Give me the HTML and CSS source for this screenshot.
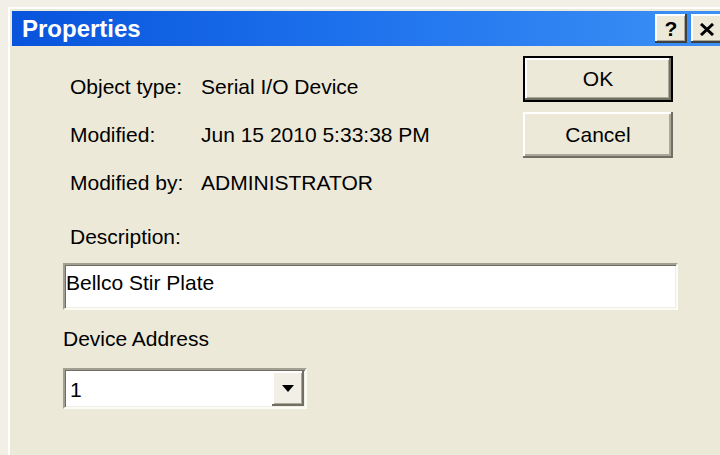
FILE: index.html
```html
<!DOCTYPE html>
<html lang="en">
<head>
<meta charset="utf-8">
<title>Properties</title>
<link rel="stylesheet" href="styles.css">
</head>
<body>
<div class="window">
  <div class="titlebar">
    <span class="title">Properties</span>
    <div class="caption-buttons">
      <button class="cap-btn help" type="button">?</button>
      <button class="cap-btn close" type="button" aria-label="Close">
        <svg width="16" height="13" viewBox="0 0 16 13"><path d="M2 1 L14 12 M14 1 L2 12" stroke="#000" stroke-width="3" fill="none"/></svg>
      </button>
    </div>
  </div>
  <div class="client">
    <div class="top">
      <dl class="info">
        <div class="row"><dt>Object type:</dt><dd>Serial I/O Device</dd></div>
        <div class="row"><dt>Modified:</dt><dd>Jun 15 2010 5:33:38 PM</dd></div>
        <div class="row"><dt>Modified by:</dt><dd>ADMINISTRATOR</dd></div>
      </dl>
      <div class="actions">
        <button class="btn default" type="button">OK</button>
        <button class="btn" type="button">Cancel</button>
      </div>
    </div>
    <div class="caption indented">Description:</div>
    <div class="textbox">Bellco Stir Plate</div>
    <div class="caption address">Device Address</div>
    <div class="combo">
      <span class="combo-value">1</span>
      <span class="combo-btn">
        <svg width="12" height="7" viewBox="0 0 12 7"><path d="M0 0 H12 L6 7 Z" fill="#000"/></svg>
      </span>
    </div>
  </div>
</div>
</body>
</html>
```
FILE: styles.css
```css
html, body {
  margin: 0;
  padding: 0;
}

body {
  background: #f1efe6;
  overflow: hidden;
  width: 720px;
  height: 455px;
  font-family: "Liberation Sans", Arial, sans-serif;
  font-size: 21px;
  color: #000;
}

.window {
  box-sizing: border-box;
  width: 720px;
  height: 460px;
  margin: 7px 0 0 8px;
  border-top: 2px solid #fff;
  border-left: 2px solid #fff;
  padding: 2px 0 0 2px;
  background: #ece9d8;
}

/* caption bar */
.titlebar {
  height: 35px;
  display: flex;
  align-items: center;
  padding: 0 5px 0 10px;
  background: linear-gradient(to right, #0854dc 0%, #1d70ec 45%, #3d91f6 100%);
}

.title {
  color: #fff;
  font-weight: bold;
  font-size: 24px;
  flex: 1;
}

.caption-buttons {
  display: flex;
  gap: 4px;
}

.cap-btn {
  width: 32px;
  height: 29px;
  padding: 0;
  border: none;
  background: #ece9d8;
  box-shadow: inset -2px -2px 0 #404040, inset 2px 2px 0 #fff, inset -3px -3px 0 #aca899;
  display: flex;
  align-items: center;
  justify-content: center;
  font-family: "Liberation Sans", Arial, sans-serif;
  font-weight: bold;
  font-size: 21px;
  color: #000;
}

.cap-btn.close svg {
  margin-top: 1px;
}

/* dialog body */
.client {
  padding: 0 50px 0 51px;
}

.top {
  display: flex;
  align-items: flex-start;
}

.info {
  margin: 17px 0 0 0;
  padding-left: 7px;
}

.row {
  display: grid;
  grid-template-columns: 131px auto;
  line-height: 48px;
}

.row dt,
.row dd {
  margin: 0;
  white-space: nowrap;
}

.actions {
  margin: 10px 5px 0 auto;
  display: flex;
  flex-direction: column;
  gap: 10px;
}

.btn {
  box-sizing: border-box;
  width: 150px;
  height: 46px;
  padding: 0;
  border: none;
  background: #ece9d8;
  font-family: "Liberation Sans", Arial, sans-serif;
  font-size: 21px;
  color: #000;
  box-shadow: inset -2px -2px 0 #716f64, inset 2px 2px 0 #fff, inset -4px -4px 0 #aca899;
}

.btn.default {
  border: 2px solid #000;
  box-shadow: inset -2px -2px 0 #716f64, inset 2px 2px 0 #fff, inset -3px -3px 0 #aca899;
}

.caption {
  line-height: 24px;
  white-space: nowrap;
}

.caption.indented {
  margin-top: 18px;
  padding-left: 7px;
}

.caption.address {
  margin-top: 17px;
}

.textbox {
  box-sizing: border-box;
  margin-top: 14px;
  height: 47px;
  padding: 6px 2px 0 1px;
  line-height: 24px;
  background: #fff;
  border: 2px solid;
  border-color: #a19e92 #fbfbf8 #fbfbf8 #a19e92;
  box-shadow: inset 1px 1px 0 #6f6d62, inset -1px -1px 0 #f1efe2;
}

.combo {
  box-sizing: border-box;
  margin-top: 17px;
  width: 244px;
  height: 41px;
  display: flex;
  align-items: stretch;
  background: #fff;
  border: 2px solid;
  border-color: #a19e92 #fbfbf8 #fbfbf8 #a19e92;
  box-shadow: inset 1px 1px 0 #6f6d62, inset -1px -1px 0 #f1efe2;
  padding: 1px;
}

.combo-value {
  flex: 1;
  padding-left: 4px;
  line-height: 37px;
}

.combo-btn {
  width: 32px;
  display: flex;
  align-items: center;
  justify-content: center;
  background: #f1efe6;
  box-shadow: inset -2px -2px 0 #716f64, inset 2px 2px 0 #fff, inset -3px -3px 0 #aca899;
}
```
